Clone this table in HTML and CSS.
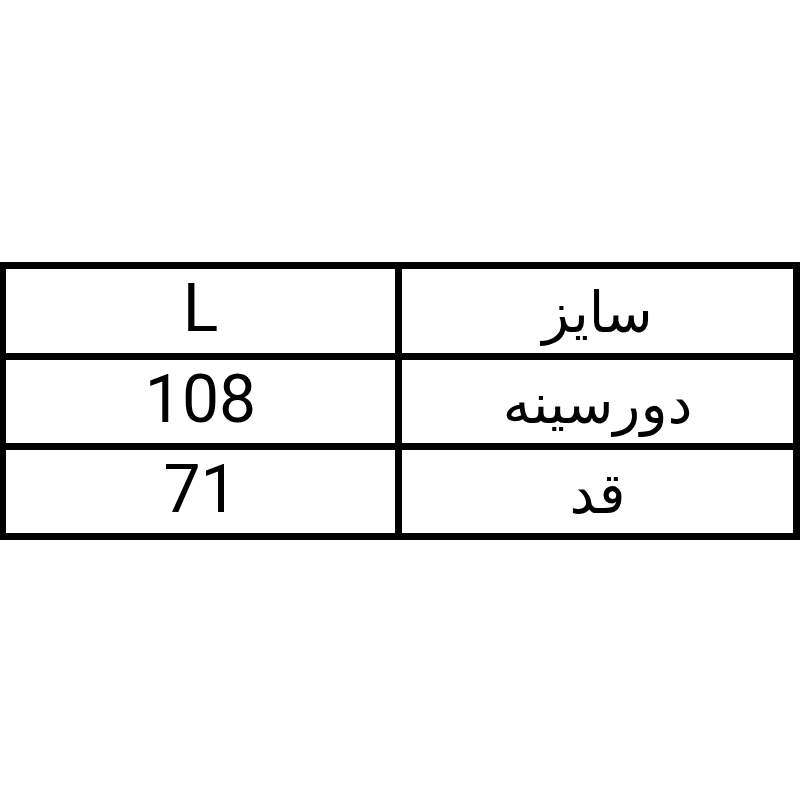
FILE: index.html
```html
<!DOCTYPE html>
<html lang="fa">
<head>
<meta charset="utf-8">
<link rel="stylesheet" href="styles.css">
</head>
<body>
<div class="table">
  <div class="cell num r1">L</div>
  <div class="cell fa r1" dir="rtl">سایز</div>
  <div class="cell num">108</div>
  <div class="cell fa" dir="rtl">دورسینه</div>
  <div class="cell num">71</div>
  <div class="cell fa" dir="rtl">قد</div>
</div>
</body>
</html>
```
FILE: styles.css
```css
html, body {
  margin: 0;
  padding: 0;
  background: #fff;
}
.table {
  margin-top: 262px;
  width: 800px;
  box-sizing: border-box;
  border-top: 7px solid #000;
  border-left: 6px solid #000;
  display: grid;
  grid-template-columns: 396px 398px;
}
.cell {
  box-sizing: border-box;
  height: 90px;
  border-right: 7px solid #000;
  border-bottom: 7px solid #000;
  display: flex;
  align-items: center;
  justify-content: center;
  color: #000;
}
.cell.r1 {
  height: 91px;
}
.num {
  font-family: Roboto, "Noto Sans", sans-serif;
  font-size: 66px;
  line-height: 1;
  padding-bottom: 4px;
}
.fa {
  font-family: "DejaVu Sans", sans-serif;
  font-size: 56px;
  line-height: 1;
  padding-top: 4px;
}
```
